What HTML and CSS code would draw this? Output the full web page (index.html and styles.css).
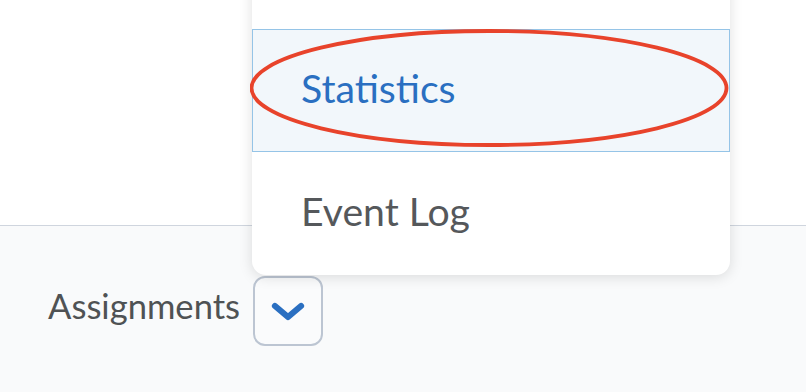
FILE: index.html
```html
<!DOCTYPE html>
<html lang="en">
<head>
<meta charset="utf-8">
<title>Assignments menu</title>
<link rel="stylesheet" href="styles.css">
</head>
<body>
<div class="page">
  <div class="top-area"></div>
  <div class="bottom-area">
    <span class="label">Assignments</span>
    <button class="toggle" type="button" aria-label="Open menu">
      <svg width="34" height="22" viewBox="0 0 34 22"><path d="M4 5 L17 16 L30 5" fill="none" stroke="#2a6fc1" stroke-width="6.2" stroke-linecap="round" stroke-linejoin="round"/></svg>
    </button>
  </div>
  <div class="menu">
    <div class="item active">Statistics</div>
    <div class="item">Event Log</div>
  </div>
  <svg class="annotation" width="486" height="124" viewBox="0 0 486 124">
    <ellipse cx="239" cy="59" rx="237.5" ry="57" fill="none" stroke="#e8432b" stroke-width="3.8"/>
  </svg>
</div>
</body>
</html>
```

FILE: styles.css
```css
* { box-sizing: border-box; }
html, body { margin: 0; padding: 0; }
body {
  width: 806px;
  height: 392px;
  overflow: hidden;
  font-family: Lato, "Open Sans", sans-serif;
  background: #f9fafb;
}
.page {
  position: relative;
  width: 806px;
  height: 392px;
  display: flex;
  flex-direction: column;
}
.top-area {
  height: 226px;
  background: #ffffff;
  border-bottom: 1px solid #cfd5de;
  flex: none;
}
.bottom-area {
  display: flex;
  align-items: flex-start;
  padding: 50px 0 0 48px;
  gap: 13px;
}
.label {
  font-size: 34.6px;
  line-height: 1.2;
  margin-top: 9px;
  color: #4f5254;
}
.toggle {
  width: 70px;
  height: 70px;
  border: 2px solid #bcc5d2;
  border-radius: 12px;
  background: #fafbfc;
  display: flex;
  align-items: center;
  justify-content: center;
  padding: 0;
}
.toggle svg { display: block; margin-top: 1px; }
.menu {
  position: absolute;
  left: 252px;
  top: -30px;
  width: 478px;
  padding-top: 59px;
  background: #ffffff;
  border-radius: 14px;
  box-shadow: 0 2px 14px rgba(0, 0, 0, 0.13);
  overflow: hidden;
}
.item {
  height: 123px;
  display: flex;
  align-items: center;
  padding: 0 0 6px 48px;
  font-size: 39.2px;
  color: #55585b;
  border: 1px solid transparent;
}
.item.active {
  background: #f2f7fb;
  border-color: #95c4e7;
  color: #2a6fc1;
}
.annotation {
  position: absolute;
  left: 250px;
  top: 29px;
}
```
